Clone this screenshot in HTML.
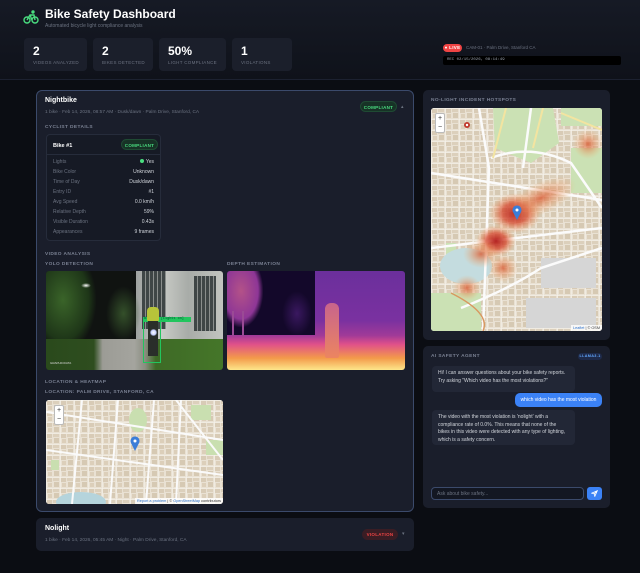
<!DOCTYPE html>
<html><head><meta charset="utf-8"><style>
*{margin:0;padding:0;box-sizing:border-box}
body{width:640px;height:573px;overflow:hidden;background:#0b0d13;font-family:"Liberation Sans",sans-serif;color:#e5e7eb;position:relative}
.a{position:absolute}
.hdr{left:0;top:0;width:640px;height:80px;background:linear-gradient(180deg,#161a25,#0f121a);border-bottom:1px solid #1c2130}
.stat{background:#1b1f2b;border-radius:4px;top:38px;height:33px}
.stat b{position:absolute;left:9px;top:6px;font-size:12px;color:#fff}
.stat i{position:absolute;left:9px;top:22px;font-size:4.5px;font-style:normal;color:#6b7280;letter-spacing:.3px}
.lbl{font-size:4.8px;color:#7b8294;letter-spacing:.4px;font-weight:bold}
.badge{font-size:4.5px;font-weight:bold;border-radius:6px;text-align:center;line-height:11px;letter-spacing:.3px}
.row{position:absolute;left:6px;right:6px;height:10px;font-size:5px;color:#6b7280}
.row span{position:absolute;right:0;color:#d1d5db}
.map{background:#ece6da;overflow:hidden;border-radius:3px}
.bub{background:#222736;border-radius:4px;font-size:5px;color:#d1d5db;line-height:7.6px;padding:4px 6px}
</style></head><body>
<svg width="0" height="0" style="position:absolute"><defs>
<pattern id="blk" width="14" height="11" patternUnits="userSpaceOnUse"><rect width="14" height="11" fill="#e9e1d3"/><rect x="1" y="1" width="5" height="4" fill="#d8cbb6"/><rect x="7" y="1" width="6" height="3" fill="#dcd0bc"/><rect x="2" y="6" width="4" height="4" fill="#dccfba"/><rect x="8" y="5" width="5" height="5" fill="#d6c9b3"/><path d="M0 0H14M0 0V11" stroke="#f8f5ef" stroke-width="1"/></pattern>
<radialGradient id="h"><stop offset="0" stop-color="#b01818" stop-opacity=".95"/><stop offset=".5" stop-color="#d6452a" stop-opacity=".75"/><stop offset="1" stop-color="#f59e5a" stop-opacity="0"/></radialGradient>
<radialGradient id="h2"><stop offset="0" stop-color="#d9603a" stop-opacity=".85"/><stop offset="1" stop-color="#f5b070" stop-opacity="0"/></radialGradient>
</defs></svg>
<div class="a hdr"></div>
<svg class="a" style="left:23px;top:10px" width="16" height="14" viewBox="0 0 16 14" fill="none" stroke="#4ade80" stroke-width="1.4"><circle cx="4" cy="10" r="3"/><circle cx="12" cy="10" r="3"/><path d="M4 10l3-5h4l1 5M7 5l2 5"/><circle cx="10" cy="2" r="1" fill="#4ade80"/></svg>
<div class="a" style="left:45px;top:7px;font-size:12px;font-weight:bold;color:#fff">Bike Safety Dashboard</div>
<div class="a" style="left:45px;top:23px;font-size:5px;color:#6b7280">Automated bicycle light compliance analysis</div>
<div class="a stat" style="left:24px;width:63px"><b>2</b><i>VIDEOS ANALYZED</i></div>
<div class="a stat" style="left:93px;width:60px"><b>2</b><i>BIKES DETECTED</i></div>
<div class="a stat" style="left:159px;width:67px"><b>50%</b><i>LIGHT COMPLIANCE</i></div>
<div class="a stat" style="left:232px;width:60px"><b>1</b><i>VIOLATIONS</i></div>
<div class="a badge" style="left:443px;top:44px;width:19px;height:8px;line-height:8px;background:#ef4444;color:#fff;font-size:4.5px">● LIVE</div>
<div class="a" style="left:466px;top:45px;font-size:4.5px;color:#6b7280">CAM-01 · Palm Drive, Stanford CA</div>
<div class="a" style="left:443px;top:56px;width:178px;height:9px;background:#000;border-radius:2px;font-family:'Liberation Mono',monospace;font-size:4px;color:#9ca3af;padding:2px 4px">REC 02/15/2026, 08:14:49</div>

<div class="a" style="left:36px;top:90px;width:378px;height:422px;background:#1a1e2b;border:1px solid #3b4a6b;border-radius:6px"></div>
<div class="a" style="left:45px;top:97px;font-size:7px;font-weight:bold;color:#fff">Nightbike</div>
<div class="a" style="left:45px;top:110px;font-size:4.8px;color:#6b7280">1 bike · Feb 14, 2026, 08:57 AM · Dusk/dawn · Palm Drive, Stanford, CA</div>
<div class="a badge" style="left:360px;top:101px;width:37px;height:11px;background:#173226;color:#4ade80;border:1px solid #1f4a33">COMPLIANT</div>
<div class="a" style="left:401px;top:104px;font-size:5px;color:#6b7280">▴</div>
<div class="a lbl" style="left:45px;top:125px">CYCLIST DETAILS</div>
<div class="a" style="left:46px;top:134px;width:115px;height:107px;background:#161a25;border:1px solid #262c3b;border-radius:4px">
 <div class="a" style="left:6px;top:8px;font-size:5.5px;font-weight:bold;color:#fff">Bike #1</div>
 <div class="a badge" style="left:74px;top:4px;width:37px;height:11px;background:#173226;color:#4ade80;border:1px solid #1f4a33">COMPLIANT</div>
 <div class="a" style="left:0;top:19px;width:100%;border-top:1px solid #262c3b"></div>
 <div class="row" style="top:24px">Lights<span><b style="display:inline-block;width:4px;height:4px;border-radius:2px;background:#4ade80;margin-right:2px"></b>Yes</span></div>
 <div class="row" style="top:34px">Bike Color<span>Unknown</span></div>
 <div class="row" style="top:44px">Time of Day<span>Dusk/dawn</span></div>
 <div class="row" style="top:54px">Entry ID<span>#1</span></div>
 <div class="row" style="top:64px">Avg Speed<span>0.0 km/h</span></div>
 <div class="row" style="top:74px">Relative Depth<span>59%</span></div>
 <div class="row" style="top:84px">Visible Duration<span>0.43s</span></div>
 <div class="row" style="top:94px">Appearances<span>9 frames</span></div>
</div>
<div class="a lbl" style="left:45px;top:252px">VIDEO ANALYSIS</div>
<div class="a lbl" style="left:45px;top:262px">YOLO DETECTION</div>
<div class="a lbl" style="left:227px;top:262px">DEPTH ESTIMATION</div>
<div class="a" style="left:46px;top:271px;width:177px;height:99px;border-radius:3px;overflow:hidden;background:#101311">
 <div class="a" style="left:90px;top:0;width:87px;height:68px;background:linear-gradient(90deg,#9ea2a0,#c9cbc6 30%,#a8aca8 60%,#c2c4bf)"></div>
 <div class="a" style="left:96px;top:0;width:24px;height:58px;background:repeating-linear-gradient(90deg,#3f4646 0 3px,#8a8e8c 3px 4px)"></div>
 <div class="a" style="left:148px;top:5px;width:22px;height:55px;background:repeating-linear-gradient(90deg,#3f4646 0 3px,#8a8e8c 3px 4px)"></div>
 <div class="a" style="left:-10px;top:-5px;width:60px;height:85px;background:radial-gradient(ellipse at 45% 40%,#3a6429,#1e3618 55%,transparent 72%)"></div>
 <div class="a" style="left:60px;top:15px;width:35px;height:55px;background:radial-gradient(ellipse,#34502a,transparent 70%)"></div>
 <div class="a" style="left:0;top:68px;width:177px;height:31px;background:linear-gradient(90deg,#2a4a1c 0%,#2e4d1f 27%,#9c9c96 32%,#a4a49e 50%,#8a8d80 56%,#3e6a26 62%,#457629)"></div>
 <div class="a" style="left:97px;top:48px;width:18px;height:44px;border:1px solid #22c55e"></div>
 <div class="a" style="left:97px;top:46px;width:48px;height:5px;background:#22c55e;font-family:'Liberation Mono',monospace;font-size:3.5px;color:#053;line-height:5px;padding-left:1px">Bike #1 [Lights on]</div>
 <div class="a" style="left:101px;top:36px;width:12px;height:14px;background:#b7c43a;border-radius:4px 4px 1px 1px"></div>
 <div class="a" style="left:102px;top:50px;width:10px;height:35px;background:#2a2e2a"></div>
 <div class="a" style="left:104px;top:58px;width:7px;height:7px;background:radial-gradient(circle,#fff,#c8d0ff 50%,transparent 75%)"></div>
 <div class="a" style="left:35px;top:12px;width:10px;height:5px;background:radial-gradient(#fff,transparent 70%)"></div>
 <div class="a" style="left:4px;top:90px;font-size:3px;color:#ddd">GRAPHICDATA</div>
</div>
<div class="a" style="left:227px;top:271px;width:178px;height:99px;border-radius:3px;overflow:hidden;background:linear-gradient(180deg,#6b2f9c 0%,#7a31a0 50%,#a03a98 65%,#e0508a 74%,#f39a4a 88%,#fde68a 100%)">
 <div class="a" style="left:0;top:0;width:88px;height:64px;background:#13082a"></div>
 <div class="a" style="left:-4px;top:-4px;width:40px;height:60px;background:radial-gradient(ellipse at 45% 40%,#b35288,#8e3696 55%,transparent 72%)"></div>
 <div class="a" style="left:5px;top:40px;width:2px;height:25px;background:#9a4a95"></div>
 <div class="a" style="left:15px;top:40px;width:2px;height:25px;background:#9a4a95"></div>
 <div class="a" style="left:55px;top:20px;width:30px;height:45px;background:radial-gradient(ellipse,#3a1860,transparent 70%)"></div>
 <div class="a" style="left:98px;top:32px;width:14px;height:55px;background:linear-gradient(180deg,#c8648c,#ec8560);border-radius:6px 6px 2px 2px"></div>
</div>
<div class="a lbl" style="left:45px;top:380px">LOCATION &amp; HEATMAP</div>
<div class="a lbl" style="left:45px;top:390px">LOCATION: PALM DRIVE, STANFORD, CA</div>
<div class="a map" style="left:46px;top:400px;width:177px;height:104px">
 <svg width="177" height="104"><rect width="177" height="104" fill="url(#blk)"/>
 <g fill="#c9dfb0"><ellipse cx="92" cy="20" rx="9" ry="12"/><rect x="145" y="5" width="20" height="15"/><rect x="5" y="60" width="8" height="10"/><rect x="160" y="40" width="17" height="15"/></g>
 <ellipse cx="35" cy="102" rx="25" ry="10" fill="#b5d4dc"/>
 <g stroke="#fafafa" stroke-width="2" fill="none"><path d="M0 12L177 40M0 50L177 75M36 0L26 104M72 0L64 104M108 0L100 104M135 0L130 104M130 0L177 60"/></g>
 </svg>
 <div class="a" style="left:8px;top:5px;width:10px;height:20px;background:#fff;border:1px solid #bbb;border-radius:2px;font-size:7px;color:#333;text-align:center;line-height:9px">+<br>−</div>
 <svg class="a" style="left:84px;top:36px" width="10" height="15" viewBox="0 0 10 15"><path d="M5 15L1 7A4.5 4.5 0 1 1 9 7Z" fill="#3b7dd8"/><circle cx="5" cy="5" r="1.5" fill="#fff"/></svg>
 <div class="a" style="right:0;bottom:0;background:rgba(255,255,255,.8);font-size:3.8px;color:#333;padding:1px 2px"><span style="color:#2a6fc9">Report a problem</span> | © <span style="color:#2a6fc9">OpenStreetMap</span> contributors</div>
</div>
<div class="a" style="left:36px;top:518px;width:378px;height:33px;background:#1a1e2b;border-radius:5px"></div>
<div class="a" style="left:45px;top:525px;font-size:7px;font-weight:bold;color:#fff">Nolight</div>
<div class="a" style="left:45px;top:538px;font-size:4.8px;color:#6b7280">1 bike · Feb 14, 2026, 05:45 AM · Night · Palm Drive, Stanford, CA</div>
<div class="a badge" style="left:362px;top:529px;width:36px;height:11px;background:#3a1d24;color:#ef4444">VIOLATION</div>
<div class="a" style="left:402px;top:531px;font-size:5px;color:#6b7280">▾</div>

<div class="a" style="left:423px;top:90px;width:187px;height:250px;background:#1a1e2b;border-radius:5px"></div>
<div class="a lbl" style="left:431px;top:98px">NO-LIGHT INCIDENT HOTSPOTS</div>
<div class="a map" style="left:431px;top:108px;width:171px;height:223px">
 <svg width="171" height="223"><rect width="171" height="223" fill="url(#blk)"/>
 <g fill="#cbe1b4"><path d="M62 0L122 0L128 35L100 55L64 40Z"/><rect x="130" y="0" width="41" height="18"/><rect x="140" y="40" width="31" height="45"/><rect x="0" y="185" width="50" height="38"/><rect x="15" y="135" width="10" height="15"/></g>
 <ellipse cx="35" cy="158" rx="26" ry="18" fill="#c4dcdf"/>
 <g fill="#d6d6d6"><rect x="95" y="190" width="70" height="30"/><rect x="110" y="150" width="55" height="30"/></g>
 <g stroke="#fbfbfb" stroke-width="2.5" fill="none"><path d="M0 65L171 92M60 50Q100 35 140 55L171 100M48 0L58 60L52 223M0 140L171 120M30 200Q80 180 110 160L171 140M100 0L92 60"/></g>
 <g stroke="#f3e4a0" stroke-width="2" fill="none"><path d="M75 0L62 50M112 0L102 40M130 5L171 22"/></g>
 <path d="M20 185Q60 205 52 223" stroke="#d89860" stroke-width="1.5" fill="none"/>
 <ellipse cx="84" cy="105" rx="26" ry="20" fill="url(#h)"/>
 <ellipse cx="110" cy="90" rx="38" ry="16" fill="url(#h2)" transform="rotate(-25 110 90)"/>
 <ellipse cx="65" cy="133" rx="20" ry="16" fill="url(#h)"/>
 <ellipse cx="50" cy="146" rx="18" ry="14" fill="url(#h2)"/>
 <ellipse cx="72" cy="160" rx="15" ry="14" fill="url(#h2)"/>
 <ellipse cx="36" cy="180" rx="14" ry="13" fill="url(#h2)"/>
 <ellipse cx="157" cy="36" rx="15" ry="15" fill="url(#h2)"/>
 <circle cx="36" cy="17" r="3" fill="#c0392b"/><circle cx="36" cy="17" r="1.2" fill="#fff"/>
 </svg>
 <div class="a" style="left:4px;top:5px;width:10px;height:20px;background:#fff;border:1px solid #bbb;border-radius:2px;font-size:7px;color:#333;text-align:center;line-height:9px">+<br>−</div>
 <svg class="a" style="left:81px;top:97px" width="10" height="15" viewBox="0 0 10 15"><path d="M5 15L1 7A4.5 4.5 0 1 1 9 7Z" fill="#3b7dd8"/><circle cx="5" cy="5" r="1.5" fill="#fff"/></svg>
 <div class="a" style="right:0;bottom:0;background:rgba(255,255,255,.8);font-size:3.8px;color:#333;padding:1px 2px"><span style="color:#2a6fc9">Leaflet</span> | © OSM</div>
</div>

<div class="a" style="left:423px;top:346px;width:187px;height:162px;background:#1a1e2b;border-radius:5px"></div>
<div class="a lbl" style="left:431px;top:354px">AI SAFETY AGENT</div>
<div class="a badge" style="left:578px;top:353px;width:24px;height:7px;line-height:7px;background:#1e2a4a;color:#60a5fa;font-size:3.8px">LLAMA3.1</div>
<div class="a bub" style="left:432px;top:366px;width:143px;height:26px">Hi! I can answer questions about your bike safety reports. Try asking "Which video has the most violations?"</div>
<div class="a" style="left:515px;top:393px;width:87px;height:14px;background:#3b82f6;border-radius:5px;font-size:5px;color:#fff;text-align:center;line-height:14px">which video has the most violation</div>
<div class="a bub" style="left:432px;top:410px;width:143px;height:35px">The video with the most violation is 'nolight' with a compliance rate of 0.0%. This means that none of the bikes in this video were detected with any type of lighting, which is a safety concern.</div>
<div class="a" style="left:431px;top:487px;width:153px;height:13px;background:#131722;border:1px solid #3b4a6b;border-radius:4px;font-size:5px;color:#6b7280;padding:3px 5px">Ask about bike safety...</div>
<div class="a" style="left:587px;top:487px;width:15px;height:13px;background:#3b82f6;border-radius:3px"></div>
<svg class="a" style="left:591px;top:490px" width="7" height="7" viewBox="0 0 10 10" fill="none" stroke="#fff" stroke-width="1.2"><path d="M9 1L1 4.5 4.5 5.5 5.5 9Z M9 1L4.5 5.5"/></svg>
</body></html>
